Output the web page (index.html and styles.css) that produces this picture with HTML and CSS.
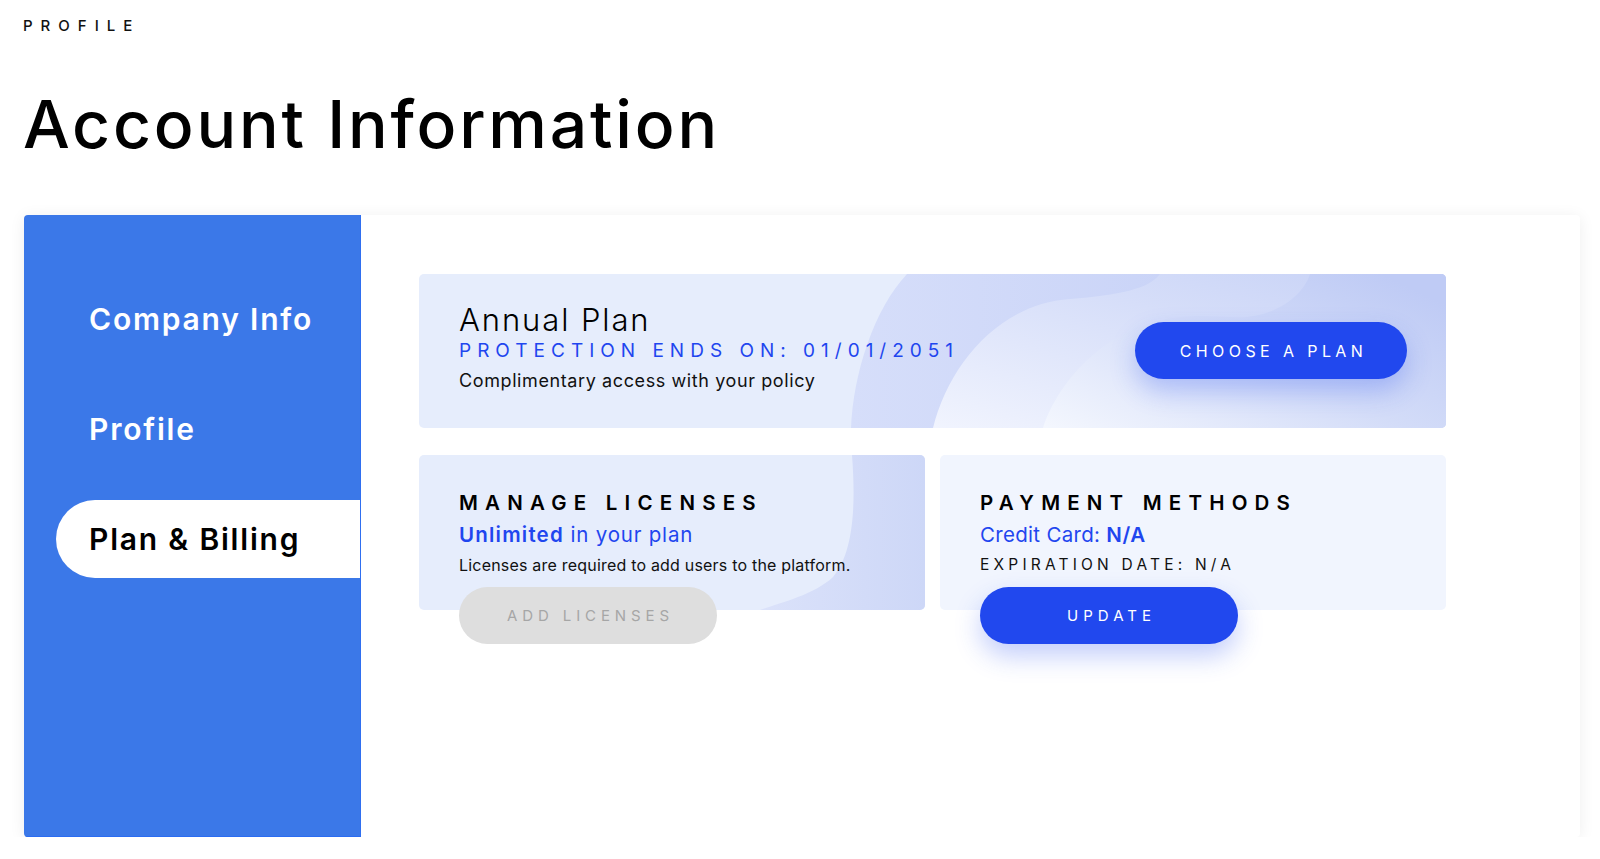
FILE: index.html
```html
<!DOCTYPE html>
<html lang="en">
<head>
<meta charset="utf-8">
<title>Account Information</title>
<link rel="stylesheet" href="styles.css">
</head>
<body>
<div class="page">
  <div class="eyebrow">PROFILE</div>
  <h1 class="title">Account Information</h1>

  <div class="panel">
    <nav class="sidebar">
      <a class="nav-item">Company Info</a>
      <a class="nav-item">Profile</a>
      <a class="nav-item active">Plan &amp; Billing</a>
    </nav>

    <main class="content">
      <section class="plan-card">
        <div class="card-bg">
          <svg class="waves" viewBox="0 0 1027 154" preserveAspectRatio="none" aria-hidden="true">
            <defs>
              <linearGradient id="gA" x1="0" y1="0" x2="1" y2="0">
                <stop offset="0" stop-color="#d6defa"/>
                <stop offset="1" stop-color="#bfcbf5"/>
              </linearGradient>
              <linearGradient id="gB" x1="0" y1="1" x2="1" y2="0">
                <stop offset="0" stop-color="#f1f4fe"/>
                <stop offset="0.6" stop-color="#d6def9"/>
                <stop offset="1" stop-color="#c6d1f6"/>
              </linearGradient>
              <linearGradient id="gC" x1="0" y1="1" x2="1" y2="0.2">
                <stop offset="0" stop-color="#f4f7fe"/>
                <stop offset="0.55" stop-color="#d3dcf8"/>
                <stop offset="1" stop-color="#bfcbf5"/>
              </linearGradient>
            </defs>
            <path d="M432,154 C434,100 455,35 488,0 L1027,0 L1027,154 Z" fill="url(#gA)"/>
            <path d="M514,154 C530,90 580,30 651,25 C700,21 730,15 741,0 L1027,0 L1027,154 Z" fill="url(#gB)"/>
            <path d="M624,154 C640,105 690,50 761,43 C790,41 810,44 828,43 C860,40 885,20 891,0 L1027,0 L1027,154 Z" fill="url(#gC)"/>
          </svg>
        </div>
        <div class="plan-text">
          <div class="plan-name">Annual Plan</div>
          <div class="plan-ends">PROTECTION ENDS ON: 01/01/2051</div>
          <div class="plan-note">Complimentary access with your policy</div>
        </div>
        <button class="btn btn-primary btn-plan">CHOOSE A PLAN</button>
      </section>

      <div class="cards-row">
        <section class="info-card licenses">
          <div class="card-bg">
            <svg class="waves" viewBox="0 0 506 155" preserveAspectRatio="none" aria-hidden="true">
              <defs>
                <linearGradient id="gL" x1="0" y1="0" x2="1" y2="0">
                  <stop offset="0" stop-color="#dbe2fa"/>
                  <stop offset="1" stop-color="#cdd7f7"/>
                </linearGradient>
              </defs>
              <path d="M433,0 C436,40 437,95 414,122 C395,140 360,148 341,155 L506,155 L506,0 Z" fill="url(#gL)"/>
            </svg>
          </div>
          <div class="card-inner">
            <div class="card-title">MANAGE LICENSES</div>
            <div class="card-sub"><strong>Unlimited</strong> in your plan</div>
            <div class="card-desc">Licenses are required to add users to the platform.</div>
            <button class="btn btn-disabled">ADD LICENSES</button>
          </div>
        </section>

        <section class="info-card payment">
          <div class="card-inner">
            <div class="card-title">PAYMENT METHODS</div>
            <div class="card-sub">Credit Card: <strong>N/A</strong></div>
            <div class="card-meta">EXPIRATION DATE: N/A</div>
            <button class="btn btn-primary">UPDATE</button>
          </div>
        </section>
      </div>
    </main>
  </div>
</div>
</body>
</html>
```

FILE: styles.css
```css
* { box-sizing: border-box; }

html, body {
  margin: 0;
  padding: 0;
  background: #ffffff;
}

body {
  font-family: "Inter", "Noto Sans", "DejaVu Sans", sans-serif;
  color: #000;
}

.page {
  padding: 16px 20px 0 24px;
}

.eyebrow {
  font-size: 15px;
  line-height: 20px;
  font-weight: 500;
  letter-spacing: 8px;
  color: #111;
  margin-left: -1px;
}

.title {
  margin: 48px 0 0 -1px;
  font-size: 66px;
  line-height: 80px;
  font-weight: 500;
  letter-spacing: 2.8px;
  color: #000;
}

.panel {
  margin-top: 51px;
  height: 622px;
  display: flex;
  background: #fff;
  border-radius: 4px;
  box-shadow: 0 2px 16px rgba(0, 0, 0, 0.07);
  overflow: hidden;
}

.sidebar {
  width: 337px;
  flex: none;
  background: #3b78e8;
  border-right: 1px solid #2f6ff0;
  border-bottom: 1px solid #2a6cf2;
  padding-top: 65px;
  display: flex;
  flex-direction: column;
  gap: 32px;
}

.nav-item {
  display: block;
  height: 78px;
  margin-left: 32px;
  padding-left: 33px;
  font-size: 30px;
  line-height: 78px;
  font-weight: 600;
  letter-spacing: 1.8px;
  color: #fff;
  white-space: nowrap;
}

.nav-item.active {
  background: #fff;
  color: #000;
  border-radius: 39px 0 0 39px;
}

.content {
  flex: 1;
  padding: 59px 134px 0 58px;
}

.plan-card {
  position: relative;
  height: 154px;
  border-radius: 5px;
  background: #e6edfc;
  display: flex;
  justify-content: space-between;
  align-items: flex-start;
  padding: 27px 39px 0 40px;
}

.card-bg {
  position: absolute;
  inset: 0;
  border-radius: 5px;
  overflow: hidden;
  z-index: 0;
}

.waves {
  display: block;
  width: 100%;
  height: 100%;
}

.plan-text, .btn-plan, .card-inner {
  position: relative;
  z-index: 1;
}

.plan-name {
  font-size: 31px;
  line-height: 37px;
  font-weight: 300;
  letter-spacing: 1.9px;
  color: #000;
}

.plan-ends {
  font-size: 19px;
  line-height: 26px;
  font-weight: 400;
  letter-spacing: 6px;
  color: #1f46ef;
}

.plan-note {
  margin-top: 4px;
  font-size: 18px;
  line-height: 26px;
  font-weight: 400;
  letter-spacing: 0.6px;
  color: #111;
}

.btn {
  display: flex;
  align-items: center;
  justify-content: center;
  height: 57px;
  border: none;
  border-radius: 29px;
  font-family: inherit;
  font-size: 15px;
  font-weight: 400;
  letter-spacing: 5px;
  padding: 0 0 0 5px;
  cursor: pointer;
}

.btn-primary {
  background: #2148ee;
  color: #fff;
  box-shadow: 0 12px 26px rgba(40, 80, 240, 0.28);
}

.btn-plan {
  width: 272px;
  margin-top: 21px;
  font-size: 16px;
  letter-spacing: 4.4px;
}

.btn-disabled {
  background: #dedede;
  color: #a6a6a6;
  letter-spacing: 4.9px;
}

.cards-row {
  margin-top: 27px;
  display: flex;
  gap: 15px;
}

.info-card {
  position: relative;
  flex: 1;
  height: 155px;
  border-radius: 5px;
  background: #e6edfc;
}

.info-card.payment {
  background: #f1f5fe;
}

.card-inner {
  padding: 35px 0 0 40px;
}

.card-title {
  font-size: 20.5px;
  line-height: 26px;
  font-weight: 600;
  letter-spacing: 7.2px;
  color: #000;
}

.card-sub {
  margin-top: 6px;
  font-size: 20.5px;
  line-height: 26px;
  font-weight: 400;
  letter-spacing: 0.8px;
  color: #1f46ef;
}

.card-sub strong {
  font-weight: 600;
  letter-spacing: 1.2px;
}

.payment .card-sub {
  letter-spacing: 0.3px;
}

.payment .card-sub strong {
  letter-spacing: 0.6px;
}

.card-desc {
  margin-top: 6px;
  font-size: 16px;
  line-height: 22px;
  letter-spacing: 0.2px;
  color: #111;
}

.card-meta {
  margin-top: 6px;
  font-size: 15.5px;
  line-height: 22px;
  letter-spacing: 4.2px;
  color: #111;
}

.info-card .btn {
  margin-top: 11px;
  width: 258px;
}
```
